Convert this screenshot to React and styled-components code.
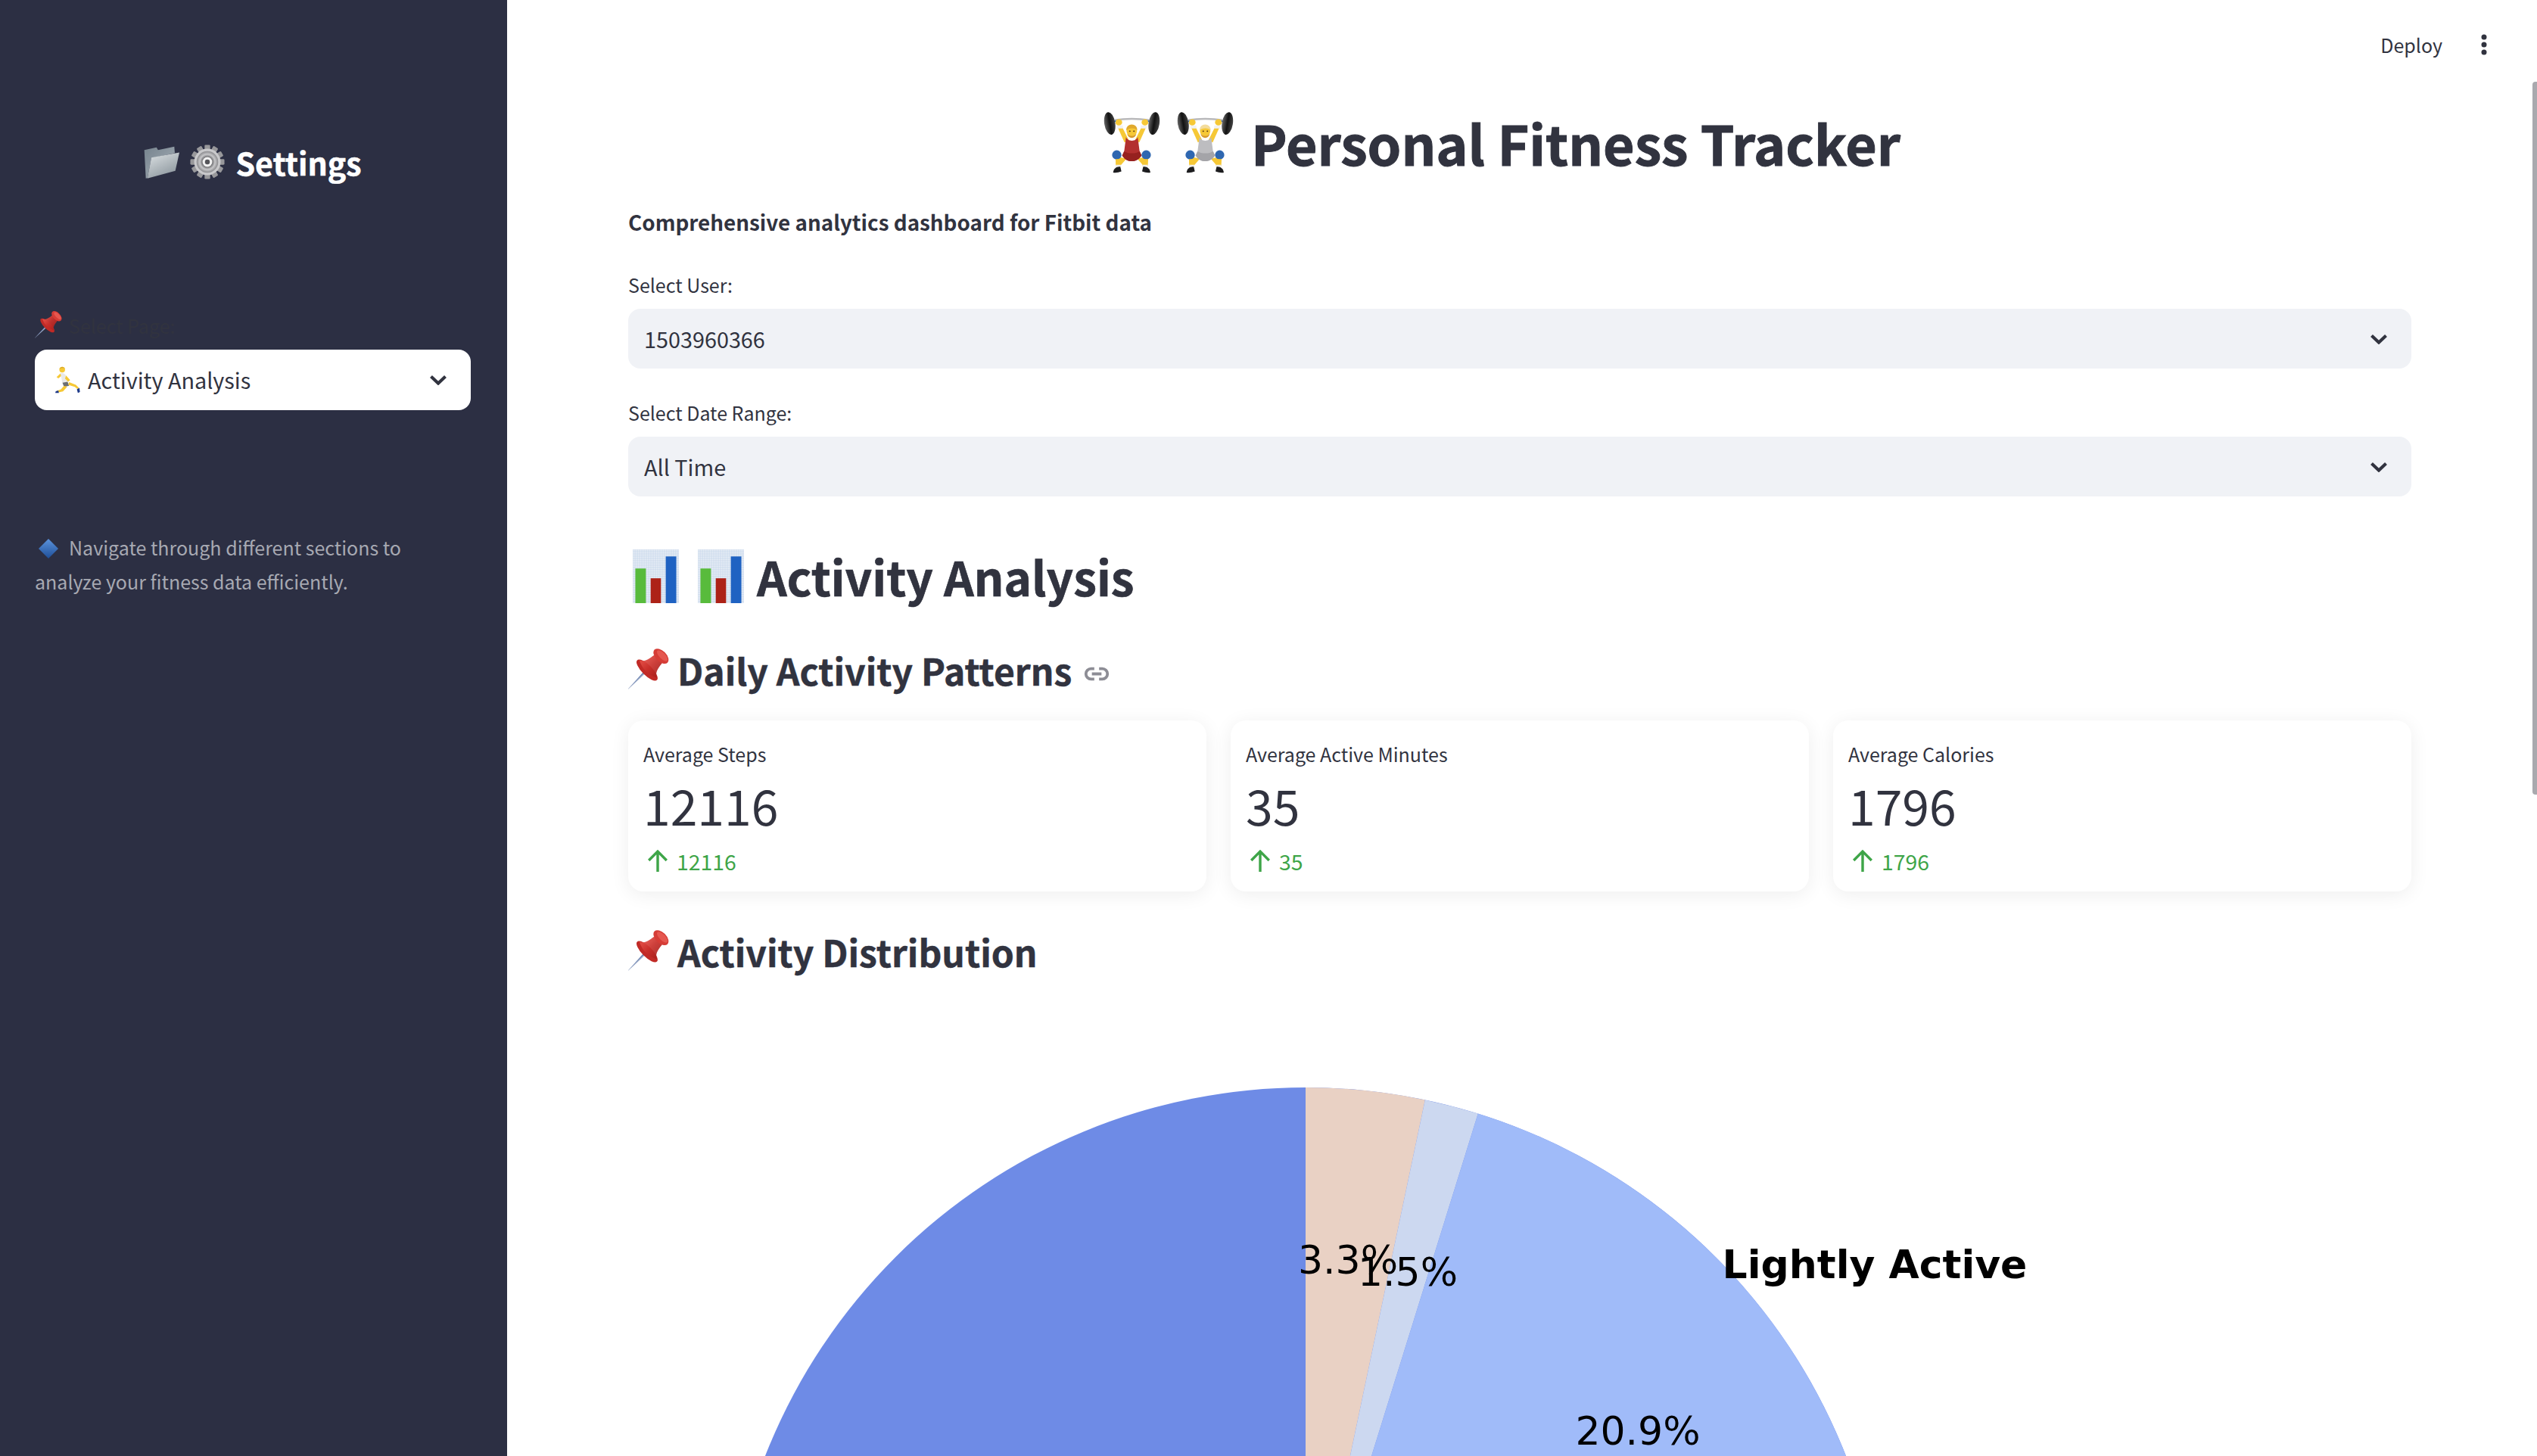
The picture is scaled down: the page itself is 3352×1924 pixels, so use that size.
import React from "react";
import styled, { createGlobalStyle } from "styled-components";

const Global = createGlobalStyle`
  html, body { margin: 0; padding: 0; background: #fff; overflow: hidden; }
  #root { height: 1924px; }
  * { box-sizing: border-box; }
`;

const FONT = `"Noto Sans CJK SC", "Noto Sans", sans-serif`;
const INK = "#31333f";

const Page = styled.div`
  display: flex;
  width: 3352px;
  height: 1924px;
  overflow: hidden;
  font-family: ${FONT};
  color: ${INK};
`;
const Sidebar = styled.aside`
  flex: 0 0 670px;
  background: #2c2f43;
  padding: 0 48px 0 46px;
`;
const SideTitle = styled.div`
  display: flex;
  align-items: center;
  justify-content: center;
  gap: 14px;
  height: 50px;
  margin: 189px 0 0;
  color: #fff;
  font-size: 41px;
  line-height: 50px;
  font-weight: 700;
  -webkit-text-stroke: 0.5px #fff;
`;
const SideLabel = styled.div`
  display: flex;
  align-items: center;
  gap: 7px;
  height: 38px;
  margin-top: 172px;
  font-size: 25px;
  line-height: 38px;
  color: ${INK};
`;
const SelectBox = styled.div`
  display: flex;
  align-items: center;
  height: ${(p) => p.$h || 79}px;
  padding: 0 31px 0 ${(p) => p.$pl || 21}px;
  border-radius: 16px;
  background: ${(p) => p.$bg};
  font-size: 28.8px;
  line-height: 38px;
  color: ${INK};
`;
const SideSelect = styled(SelectBox)`
  margin-top: 13px;
  gap: 10px;
`;
const SelectText = styled.span`
  flex: 1;
`;
const Note = styled.p`
  margin: 159px 0 0;
  font-size: 25px;
  line-height: 45px;
  color: #a7a9b2;
`;
const NoteGlyph = styled.svg`
  display: inline-block;
  vertical-align: -4px;
  margin: 0 14px 0 5px;
`;

const Main = styled.main`
  position: relative;
  flex: 1;
  min-width: 0;
  overflow: hidden;
  background: #fff;
`;
const Toolbar = styled.header`
  display: flex;
  align-items: center;
  justify-content: flex-end;
  gap: 51px;
  height: 118px;
  padding-right: 66px;
  font-size: 25px;
  line-height: 36px;
`;
const Scrollbar = styled.div`
  position: absolute;
  top: 108px;
  right: 0;
  width: 6px;
  height: 942px;
  background: #a9a9ae;
  border-radius: 4px 0 0 4px;
`;
const Content = styled.div`
  margin: 0 166px 0 160px;
`;
const Title = styled.h1`
  display: flex;
  align-items: center;
  justify-content: center;
  gap: 20px;
  height: 100px;
  margin: 20px 0 0;
  padding-right: 48px;
  font-size: 71.6px;
  line-height: 100px;
  font-weight: 700;
  -webkit-text-stroke: 1px ${INK};
`;
const TitleText = styled.span`
  margin-left: 2px;
`;
const Subtitle = styled.p`
  height: 40px;
  margin: 35px 0 0;
  font-size: 27.8px;
  line-height: 40px;
  font-weight: 700;
`;
const FieldLabel = styled.div`
  height: 32px;
  margin: ${(p) => p.$mt}px 0 16px;
  font-size: 25px;
  line-height: 32px;
`;
const Heading2 = styled.h2`
  display: flex;
  align-items: center;
  gap: 25px;
  height: 90px;
  margin: 60px 0 0;
  padding-left: 6px;
  font-size: 62px;
  line-height: 90px;
  font-weight: 700;
  -webkit-text-stroke: 0.7px ${INK};
`;
const H2Text = styled.span`
  margin-left: -8px;
`;
const Heading3 = styled.h3`
  display: flex;
  align-items: center;
  height: 70px;
  margin: ${(p) => p.$mt}px 0 0;
  font-size: 48px;
  line-height: 70px;
  font-weight: 700;
  -webkit-text-stroke: 0.5px ${INK};
`;
const H3Text = styled.span`
  margin-left: 8px;
`;
const LinkGlyph = styled.svg`
  margin: 10px 0 0 16px;
`;
const Metrics = styled.section`
  display: grid;
  grid-template-columns: repeat(3, 1fr);
  gap: 32px;
  margin-top: 32px;
`;
const Card = styled.article`
  height: 226px;
  padding: 28px 20px 0;
  background: #fff;
  border-radius: 20px;
  box-shadow: 0 4px 26px rgba(0, 0, 0, 0.07);
`;
const MetricLabel = styled.div`
  font-size: 25px;
  line-height: 32px;
`;
const MetricValue = styled.div`
  margin-top: 9px;
  font-size: 64.3px;
  line-height: 84px;
`;
const Delta = styled.div`
  display: flex;
  align-items: center;
  gap: 11px;
  margin-top: 13px;
  padding-left: 5px;
  color: #3ea548;
  font-size: 28.4px;
  line-height: 40px;
`;
const ChartWrap = styled.figure`
  margin: 28px 0 0;
  height: 700px;
`;
const ChartSvg = styled.svg`
  display: block;
`;
const ChartLabel = styled.text`
  font-family: "DejaVu Sans", sans-serif;
  font-size: 52px;
  fill: #000;
  text-anchor: middle;
`;
const ChartStrong = styled(ChartLabel)`
  font-weight: 700;
`;

const Chevron = () => (
  <svg width="24" height="14" viewBox="0 0 24 14">
    <path d="M2.5 2.5 12 11.5 21.5 2.5" fill="none" stroke={INK} strokeWidth="4.2" />
  </svg>
);

const Kebab = () => (
  <svg width="8" height="28" viewBox="0 0 8 28">
    <circle cx="4" cy="4" r="3.5" fill={INK} />
    <circle cx="4" cy="14" r="3.5" fill={INK} />
    <circle cx="4" cy="24" r="3.5" fill={INK} />
  </svg>
);

const LinkIcon = () => (
  <LinkGlyph width="34" height="19" viewBox="0 0 32 18">
    <path
      d="M13 2.5H9a6.5 6.5 0 0 0 0 13h4M19 2.5h4a6.5 6.5 0 0 1 0 13h-4M10 9h12"
      fill="none"
      stroke="#8d8d95"
      strokeWidth="3.6"
    />
  </LinkGlyph>
);

const UpArrow = () => (
  <svg width="28" height="30" viewBox="0 0 26 28">
    <path d="M13 27V2M2 13 13 2l11 11" fill="none" stroke="#3ea548" strokeWidth="3.2" />
  </svg>
);

const Lifter = ({ suit, suitDark, hair }) => (
  <svg width="77" height="81" viewBox="0 0 225 237">
    <defs>
      <linearGradient id="plate" x1="0" x2="1" y1="0" y2="0">
        <stop offset="0" stopColor="#666" />
        <stop offset="0.5" stopColor="#111" />
        <stop offset="1" stopColor="#444" />
      </linearGradient>
    </defs>
    <path d="M45 31 Q112 22 180 31" fill="none" stroke="#b9b9bb" strokeWidth="7" />
    <path d="M44 36h18M164 36h18" stroke="#2f67b0" strokeWidth="6" />
    <ellipse cx="27" cy="44" rx="21" ry="44" transform="rotate(-9 27 44)" fill="url(#plate)" />
    <ellipse cx="198" cy="44" rx="21" ry="44" transform="rotate(9 198 44)" fill="url(#plate)" />
    <path d="M58 60 L84 118 L100 108 L76 60Z" fill="#f6c836" />
    <path d="M167 60 L141 118 L125 108 L149 60Z" fill="#f6c836" />
    <path d="M55 52h23v12H55zM147 52h23v12h-23z" fill="#f2f2f2" />
    <ellipse cx="62" cy="40" rx="13" ry="12" fill="#f6c836" />
    <ellipse cx="163" cy="40" rx="13" ry="12" fill="#f6c836" />
    <path d="M72 176 L48 168 L52 208 L68 208 L92 180Z" fill="#f6c836" />
    <path d="M153 176 L177 168 L173 208 L157 208 L133 180Z" fill="#f6c836" />
    <path d="M90 96 C94 116 131 116 135 96 L142 150 L150 168 C138 186 125 190 112 190 C99 190 86 186 75 168 L83 150Z" fill={suit} />
    <path d="M83 152 C95 162 130 162 142 152 L150 168 C138 186 125 190 112 190 C99 190 86 186 75 168Z" fill={suitDark} />
    <circle cx="112" cy="74" r="20" fill="#f6c836" />
    <path d="M91 72 C88 40 136 40 133 72 C128 60 98 60 91 72Z" fill={hair} />
    <path d="M94 84 Q112 102 130 84 Q126 99 112 100 Q98 99 94 84Z" fill="#d79a2b" />
    <path d="M104 74h1M120 74h1" stroke="#5a3b10" strokeWidth="5" strokeLinecap="round" />
    <circle cx="54" cy="166" r="18" fill="#2f67b0" />
    <circle cx="168" cy="166" r="18" fill="#2f67b0" />
    <path d="M50 182h20v28H50zM154 182h20v28h-20z" fill="#f6c836" />
    <path d="M50 204h20v8H50zM154 204h20v8h-20z" fill="#eee" />
    <path d="M40 234 C42 218 55 210 68 212 L72 230 Q56 236 40 234Z" fill="#1d1d1f" />
    <path d="M184 234 C182 218 169 210 156 212 L152 230 Q168 236 184 234Z" fill="#1d1d1f" />
  </svg>
);

const Folder = () => (
  <svg width="47" height="44" viewBox="0 0 140 130">
    <defs>
      <linearGradient id="fback" x1="0" x2="1" y1="0" y2="1">
        <stop offset="0" stopColor="#76838e" />
        <stop offset="1" stopColor="#a7b1b8" />
      </linearGradient>
      <linearGradient id="ffront" x1="0" x2="0.6" y1="0" y2="1">
        <stop offset="0" stopColor="#dfe4e6" />
        <stop offset="1" stopColor="#8e989f" />
      </linearGradient>
    </defs>
    <path d="M2 18 L50 8 L56 18 L120 5 L122 30 L30 50 L14 128 L8 130 Z" fill="url(#fback)" />
    <path d="M30 48 L140 28 L124 100 L14 130Z" fill="url(#ffront)" />
  </svg>
);

const Gear = () => {
  const teeth = Array.from({ length: 12 }, (_, i) => i * 30);
  return (
    <svg width="46" height="46" viewBox="0 0 100 100">
      <defs>
        <radialGradient id="gearface">
          <stop offset="0.25" stopColor="#eeeeee" />
          <stop offset="0.45" stopColor="#6d6d70" />
          <stop offset="0.7" stopColor="#c7c7c9" />
          <stop offset="1" stopColor="#8b8b8e" />
        </radialGradient>
      </defs>
      {teeth.map((a) => (
        <rect key={a} x="42" y="1" width="16" height="20" rx="3" fill="#98989b" transform={`rotate(${a} 50 50)`} />
      ))}
      <circle cx="50" cy="50" r="38" fill="#c9c9cb" />
      <circle cx="50" cy="50" r="31" fill="url(#gearface)" />
      <circle cx="50" cy="50" r="14" fill="#f1f1f1" />
      <circle cx="50" cy="50" r="7" fill="#55555a" />
    </svg>
  );
};

const Pin = ({ size }) => (
  <svg width={size} height={size} viewBox="0 0 160 160">
    <defs>
      <linearGradient id="pinred" x1="0" x2="1" y1="0" y2="0">
        <stop offset="0" stopColor="#e8544b" />
        <stop offset="0.5" stopColor="#c92f2a" />
        <stop offset="1" stopColor="#a71f1c" />
      </linearGradient>
      <linearGradient id="needle" x1="0" x2="1" y1="0" y2="0">
        <stop offset="0" stopColor="#3f5e9c" />
        <stop offset="1" stopColor="#d9dde5" />
      </linearGradient>
    </defs>
    <g transform="translate(70 80) rotate(45)">
      <path d="M-5 6 L5 6 L0 108Z" fill="url(#needle)" />
      <ellipse cx="0" cy="0" rx="52" ry="19" fill="#c12a26" />
      <path d="M-46 -6 C-22 -16 -24 -44 -20 -62 L20 -62 C24 -44 22 -16 46 -6 Q0 18 -46 -6Z" fill="url(#pinred)" opacity="0.92" />
      <ellipse cx="0" cy="-73" rx="34" ry="20" fill="#d63c36" />
      <ellipse cx="2" cy="-78" rx="26" ry="11" fill="#e5574f" />
    </g>
  </svg>
);

const Runner = () => (
  <svg width="33" height="36" viewBox="0 0 97 106">
    <circle cx="27" cy="13" r="11" fill="#f6c836" />
    <path d="M15 10 Q25 -4 38 8 Q28 5 15 10Z" fill="#d9a92a" />
    <path d="M20 28 L5 42 L12 47 L26 36Z" fill="#f6c836" />
    <path d="M20 26 Q36 24 44 40 L47 62 L28 66 Z" fill="#e9e9e9" />
    <path d="M42 36 L58 54 L50 60 L38 48Z" fill="#f6c836" />
    <path d="M28 64 L48 60 L54 76 L34 80Z" fill="#6d6f73" />
    <path d="M34 76 L22 90 L6 96 L8 102 L30 98 L46 80Z" fill="#f6c836" />
    <path d="M50 72 L76 80 L86 88 L92 84 L80 72 L54 62Z" fill="#f6c836" />
    <path d="M2 97 L12 94 L14 104 L0 104Z" fill="#1e3a8a" />
    <path d="M84 90 L94 84 L96 100 L88 104Z" fill="#1e3a8a" />
  </svg>
);

const Diamond = () => (
  <NoteGlyph width="26" height="26" viewBox="0 0 26 26">
    <defs>
      <linearGradient id="dia" x1="0" x2="0" y1="0" y2="1">
        <stop offset="0" stopColor="#5b93dc" />
        <stop offset="1" stopColor="#1f4f98" />
      </linearGradient>
    </defs>
    <path d="M13 0 26 13 13 26 0 13Z" fill="url(#dia)" />
  </NoteGlyph>
);

const BarTile = () => {
  const lines = Array.from({ length: 22 }, (_, i) => i * 9);
  return (
    <svg width="61" height="71" viewBox="0 0 183 214">
      <rect width="183" height="214" fill="#e6edf6" />
      {lines.map((v) => (
        <path key={`v${v}`} d={`M${v} 0V214`} stroke="#bfd0e6" strokeWidth="1.5" />
      ))}
      {lines.concat([198, 207]).map((v) => (
        <path key={`h${v}`} d={`M0 ${v}H183`} stroke="#bfd0e6" strokeWidth="1.5" />
      ))}
      <rect x="10" y="76" width="42" height="138" fill="#58bb3c" />
      <rect x="71" y="115" width="41" height="99" fill="#ad2217" />
      <rect x="131" y="28" width="42" height="186" fill="#1f62c2" />
    </svg>
  );
};

const polar = (cx, cy, r, deg) => {
  const a = (deg * Math.PI) / 180;
  return [cx + r * Math.sin(a), cy - r * Math.cos(a)];
};
const wedge = (cx, cy, r, from, to) => {
  const [x1, y1] = polar(cx, cy, r, from);
  const [x2, y2] = polar(cx, cy, r, to);
  return `M${cx} ${cy}L${x1} ${y1}A${r} ${r} 0 ${to - from > 180 ? 1 : 0} 1 ${x2} ${y2}Z`;
};

const CX = 895;
const CY = 884;
const R = 767;

const Pie = () => (
  <ChartSvg width="2356" height="700" viewBox="0 0 2356 700">
    <circle cx={CX} cy={CY} r={R} fill="#6e8be6" />
    <path d={wedge(CX, CY, R, 0, 11.88)} fill="#e9d1c4" />
    <path d={wedge(CX, CY, R, 11.88, 17.28)} fill="#ccd8f0" />
    <path d={wedge(CX, CY, R, 17.28, 92.52)} fill="#a0bbf9" />
    <ChartLabel x="951" y="363">3.3%</ChartLabel>
    <ChartLabel x="1030" y="379">1.5%</ChartLabel>
    <ChartStrong x="1647" y="369">Lightly Active</ChartStrong>
    <ChartLabel x="1334" y="589">20.9%</ChartLabel>
  </ChartSvg>
);

const metrics = [
  { label: "Average Steps", value: "12116" },
  { label: "Average Active Minutes", value: "35" },
  { label: "Average Calories", value: "1796" },
];

export default function App() {
  return (
    <Page>
      <Global />
      <Sidebar>
        <SideTitle>
          <Folder />
          <Gear />
          <span>Settings</span>
        </SideTitle>
        <SideLabel>
          <Pin size={38} />
          <span>Select Page:</span>
        </SideLabel>
        <SideSelect $bg="#fff" $pl={27} $h={80}>
          <Runner />
          <SelectText>Activity Analysis</SelectText>
          <Chevron />
        </SideSelect>
        <Note>
          <Diamond />
          Navigate through different sections to analyze your fitness data efficiently.
        </Note>
      </Sidebar>
      <Main>
        <Toolbar>
          <span>Deploy</span>
          <Kebab />
        </Toolbar>
        <Scrollbar />
        <Content>
          <Title>
            <Lifter suit="#b3302f" suitDark="#96211f" hair="#e0a92e" />
            <Lifter suit="#bdbdc0" suitDark="#a4a4a8" hair="#f3dc9c" />
            <TitleText>Personal Fitness Tracker</TitleText>
          </Title>
          <Subtitle>Comprehensive analytics dashboard for Fitbit data</Subtitle>
          <FieldLabel $mt={47}>Select User:</FieldLabel>
          <SelectBox $bg="#f0f2f6">
            <SelectText>1503960366</SelectText>
            <Chevron />
          </SelectBox>
          <FieldLabel $mt={42}>Select Date Range:</FieldLabel>
          <SelectBox $bg="#f0f2f6">
            <SelectText>All Time</SelectText>
            <Chevron />
          </SelectBox>
          <Heading2>
            <BarTile />
            <BarTile />
            <H2Text>Activity Analysis</H2Text>
          </Heading2>
          <Heading3 $mt={44}>
            <Pin size={57} />
            <H3Text>Daily Activity Patterns</H3Text>
            <LinkIcon />
          </Heading3>
          <Metrics>
            {metrics.map((m) => (
              <Card key={m.label}>
                <MetricLabel>{m.label}</MetricLabel>
                <MetricValue>{m.value}</MetricValue>
                <Delta>
                  <UpArrow />
                  <span>{m.value}</span>
                </Delta>
              </Card>
            ))}
          </Metrics>
          <Heading3 $mt={44}>
            <Pin size={57} />
            <H3Text>Activity Distribution</H3Text>
          </Heading3>
          <ChartWrap>
            <Pie />
          </ChartWrap>
        </Content>
      </Main>
    </Page>
  );
}
